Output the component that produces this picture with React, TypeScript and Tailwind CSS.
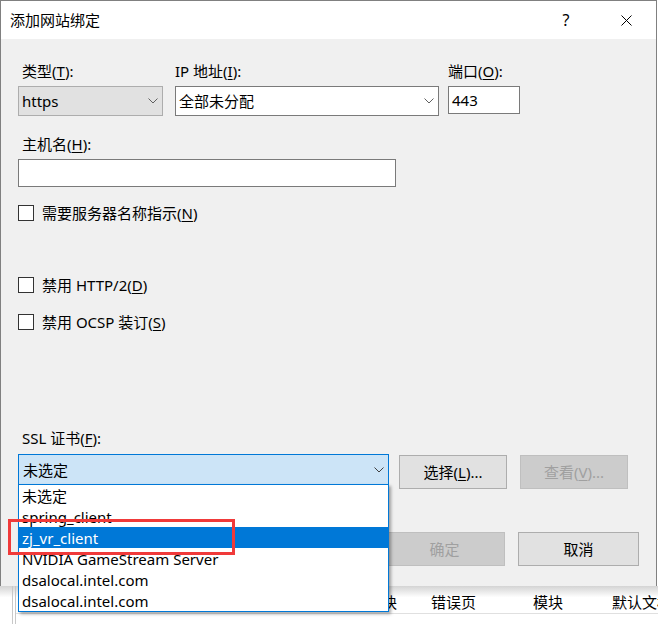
import React from 'react';

const font = { fontFamily: '"Segoe UI", "Noto Sans", "Noto Sans CJK SC", sans-serif' };

function Chevron({ color = '#606060' }: { color?: string }) {
  return (
    <svg width="10" height="6" viewBox="0 0 10 6" className="shrink-0">
      <path d="M0.5 0.5 L5 5 L9.5 0.5" fill="none" stroke={color} strokeWidth="1" />
    </svg>
  );
}

function Key({ k }: { k: string }) {
  return (
    <>
      (<span className="underline underline-offset-2">{k}</span>)
    </>
  );
}

function Checkbox({ children }: { children: React.ReactNode }) {
  return (
    <div className="flex items-center h-5 gap-[8px]">
      <div className="w-[16px] h-[16px] bg-white border border-[#333333]" />
      <span>{children}</span>
    </div>
  );
}

function Btn({ children, disabled, className = '' }: { children: React.ReactNode; disabled?: boolean; className?: string }) {
  return (
    <div
      className={
        'h-[34px] flex items-center justify-center border ' +
        (disabled ? 'bg-[#cccccc] border-[#bfbfbf] text-[#a0a0a0] ' : 'bg-[#e1e1e1] border-[#adadad] text-black ') +
        className
      }
    >
      {children}
    </div>
  );
}

const certs = ['未选定', 'spring_client', 'zj_vr_client', 'NVIDIA GameStream Server', 'dsalocal.intel.com', 'dsalocal.intel.com'];

export default function App() {
  return (
    <div className="relative w-[658px] h-[624px] bg-white overflow-hidden text-[15px] leading-5 text-black" style={font}>
      {/* dialog */}
      <div className="w-[657px] h-[586px] border border-[#808080] border-b-0 flex flex-col">
        <div className="h-[38px] bg-white flex items-center pl-[9px] shrink-0">
          <span className="flex-1">添加网站绑定</span>
          <span className="w-[60px] text-center text-[16px]">?</span>
          <div className="w-[60px] flex justify-center">
            <svg width="11" height="11" viewBox="0 0 11 11">
              <path d="M0.5 0.5 L10.5 10.5 M10.5 0.5 L0.5 10.5" stroke="#000" strokeWidth="1" />
            </svg>
          </div>
        </div>
        <div className="flex-1 bg-[#f0f0f0] pl-[17px] flex flex-col">
          {/* row 1 */}
          <div className="flex mt-[22px]">
            <div className="flex flex-col w-[145px]">
              <span className="pl-[4px]">类型<Key k="T" />:</span>
              <div className="mt-[5px] h-[30px] bg-[#e1e1e1] border border-[#adadad] flex items-center justify-between pl-[3px] pr-[4px]">
                <span>https</span>
                <Chevron />
              </div>
            </div>
            <div className="flex flex-col w-[264px] ml-[12px]">
              <span>IP 地址<Key k="I" />:</span>
              <div className="mt-[5px] h-[30px] bg-white border border-[#7a7a7a] flex items-center justify-between pl-[3px] pr-[4px]">
                <span>全部未分配</span>
                <Chevron />
              </div>
            </div>
            <div className="flex flex-col w-[72px] ml-[9px]">
              <span>端口<Key k="O" />:</span>
              <div className="mt-[5px] h-[28px] bg-white border border-[#7a7a7a] flex items-center pl-[3px]">
                <span>443</span>
              </div>
            </div>
          </div>
          {/* host */}
          <span className="mt-[18px] pl-[4px]">主机名<Key k="H" />:</span>
          <div className="mt-[5px] w-[378px] h-[28px] bg-white border border-[#7a7a7a]" />
          <div className="mt-[16px]">
            <Checkbox>需要服务器名称指示<Key k="N" /></Checkbox>
          </div>
          <div className="mt-[52px]">
            <Checkbox>禁用 HTTP/2<Key k="D" /></Checkbox>
          </div>
          <div className="mt-[17px]">
            <Checkbox>禁用 OCSP 装订<Key k="S" /></Checkbox>
          </div>
          {/* ssl */}
          <span className="mt-[96px] pl-[4px]">SSL 证书<Key k="F" />:</span>
          <div className="mt-[6px] flex items-start">
            <div className="w-[371px] h-[31px] bg-[#cce4f7] border border-[#0078d7] flex items-center justify-between pl-[4px] pr-[4px]">
              <span>未选定</span>
              <Chevron color="#404040" />
            </div>
            <Btn className="w-[108px] ml-[10px] mt-[1px]">选择<Key k="L" />...</Btn>
            <Btn disabled className="w-[108px] ml-[13px] mt-[1px]">查看<Key k="V" />...</Btn>
          </div>
          <div className="mt-[43px] flex pl-[366px]">
            <Btn disabled className="w-[121px]">确定</Btn>
            <Btn className="w-[121px] ml-[13px]">取消</Btn>
          </div>
        </div>
      </div>
      {/* background window strip */}
      <div className="h-[38px] bg-gradient-to-b from-[#d4d4d4] via-white via-30% to-white flex">
        <div className="w-[13px] shrink-0 border-r border-[#c8c8c8]" />
        <div className="w-[3px] shrink-0 border-r border-[#c8c8c8]" />
        <div className="flex-1 min-w-0 overflow-hidden border-b border-[#e0e0e0] h-[28px] flex items-end pb-[1px] whitespace-nowrap">
          <span className="shrink-0 ml-[351px]">模块</span>
          <span className="shrink-0 ml-[34px]">错误页</span>
          <span className="shrink-0 ml-[57px]">模块</span>
          <span className="shrink-0 ml-[49px]">默认文档</span>
        </div>
      </div>
      {/* open dropdown list */}
      <div className="absolute left-[18px] top-[484px] w-[371px] bg-white border border-[#0078d7] shadow-[2px_2px_3px_rgba(0,0,0,0.35)]">
        {certs.map((c, i) => (
          <div key={i} className={'h-[21px] flex items-center pl-[3px] ' + (i === 2 ? 'bg-[#0078d7] text-white' : '')}>
            {c}
          </div>
        ))}
      </div>
      {/* annotation */}
      <div className="absolute left-[8px] top-[519px] w-[227px] h-[36px] border-[3px] border-[#f03a3a]" />
    </div>
  );
}
